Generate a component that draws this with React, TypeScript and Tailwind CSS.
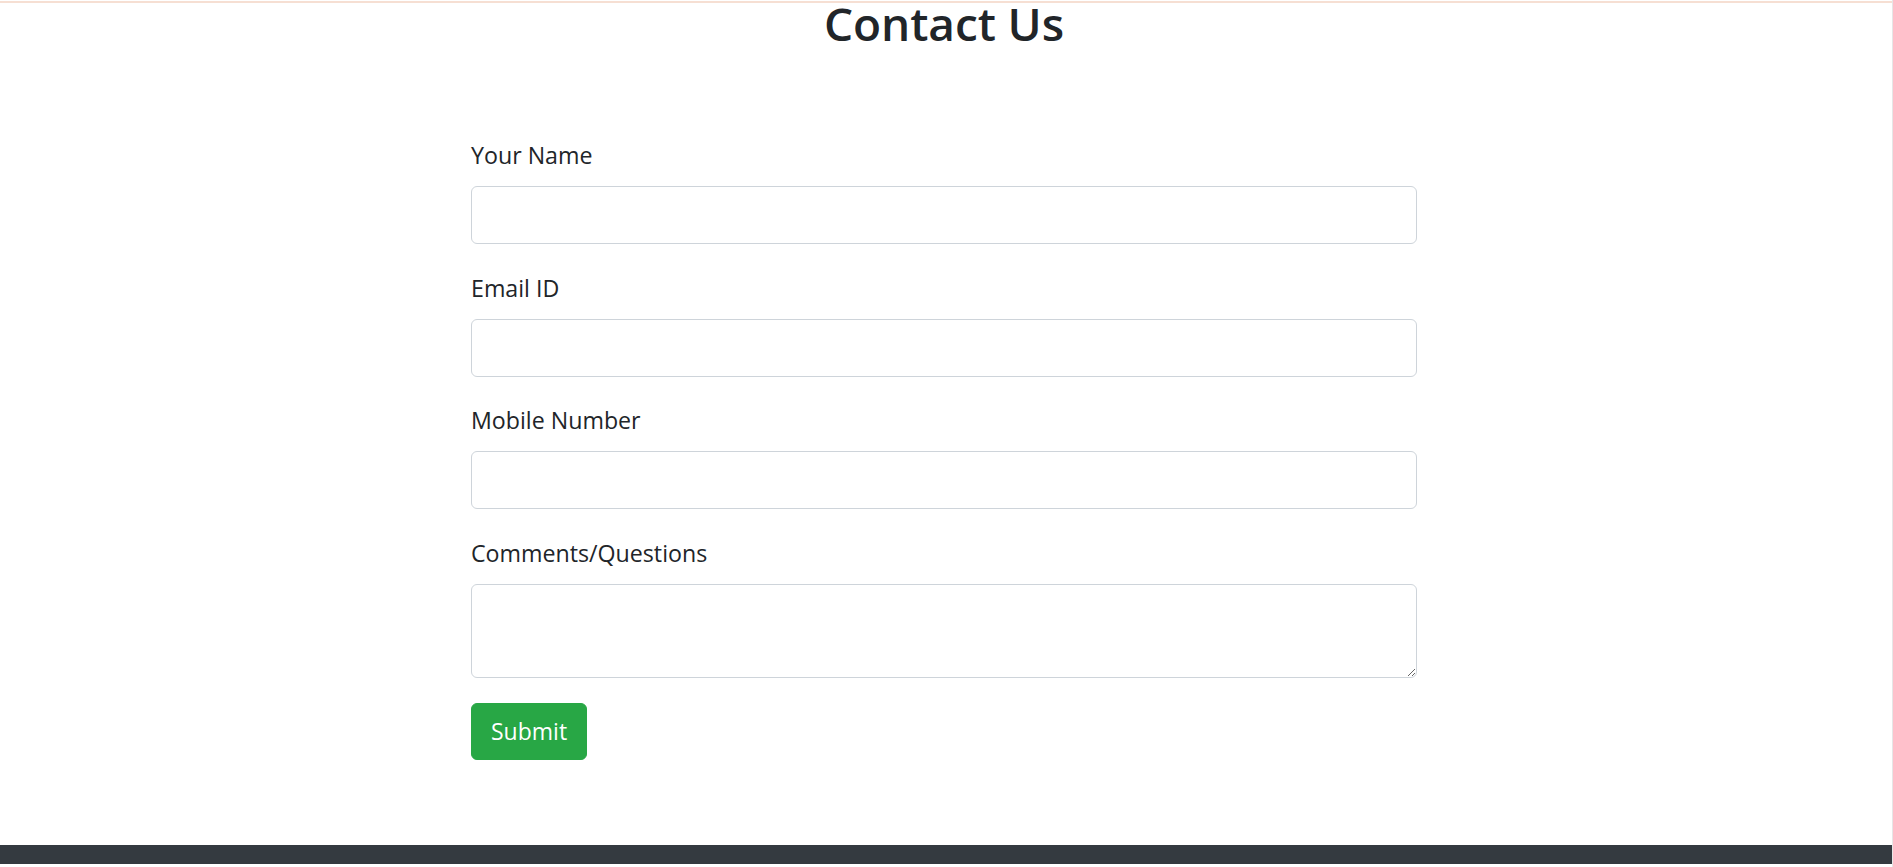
import React from "react";

const fields = [
  { id: "name", label: "Your Name", type: "text" },
  { id: "email", label: "Email ID", type: "email" },
  { id: "mobile", label: "Mobile Number", type: "tel" },
];

const font = { fontFamily: '"Open Sans", "Noto Sans", sans-serif' };

export default function App() {
  return (
    <div
      className="h-[867px] w-full flex flex-col bg-white border-r border-[#e6e6e6] text-[#212529] overflow-hidden"
      style={font}
    >
      {/* top accent line */}
      <div className="pt-[1px]">
        <div className="h-[2px] bg-[#f6dfd3]" />
      </div>

      <main className="flex-1 flex flex-col items-center pr-[4px]">
        <h1 className="text-[46px] leading-[40px] font-semibold tracking-[-0.1px]">
          Contact Us
        </h1>

        <form className="w-[946px] mt-[94px]" onSubmit={(e) => e.preventDefault()}>
          {fields.map((f) => (
            <div key={f.id} className="mb-[25.5px]">
              <label
                htmlFor={f.id}
                className="block text-[23.2px] leading-[36px] mb-[13px]"
              >
                {f.label}
              </label>
              <input
                id={f.id}
                type={f.type}
                className="block w-full h-[58px] px-[18px] text-[23px] border border-[#ced4da] rounded-[6px] bg-white outline-none"
              />
            </div>
          ))}

          <div className="mb-[25px]">
            <label
              htmlFor="comments"
              className="block text-[23.2px] leading-[36px] mb-[13px]"
            >
              Comments/Questions
            </label>
            <textarea
              id="comments"
              className="block w-full h-[94px] px-[18px] py-[9px] text-[23px] border border-[#ced4da] rounded-[6px] bg-white outline-none resize-y"
            />
          </div>

          <button
            type="submit"
            className="h-[57px] px-[19px] text-[23px] text-white bg-[#28a745] rounded-[6px] border border-[#28a745]"
          >
            Submit
          </button>
        </form>
      </main>

      <footer className="h-[19px] bg-[#343a40] mb-[3px]" />
    </div>
  );
}
